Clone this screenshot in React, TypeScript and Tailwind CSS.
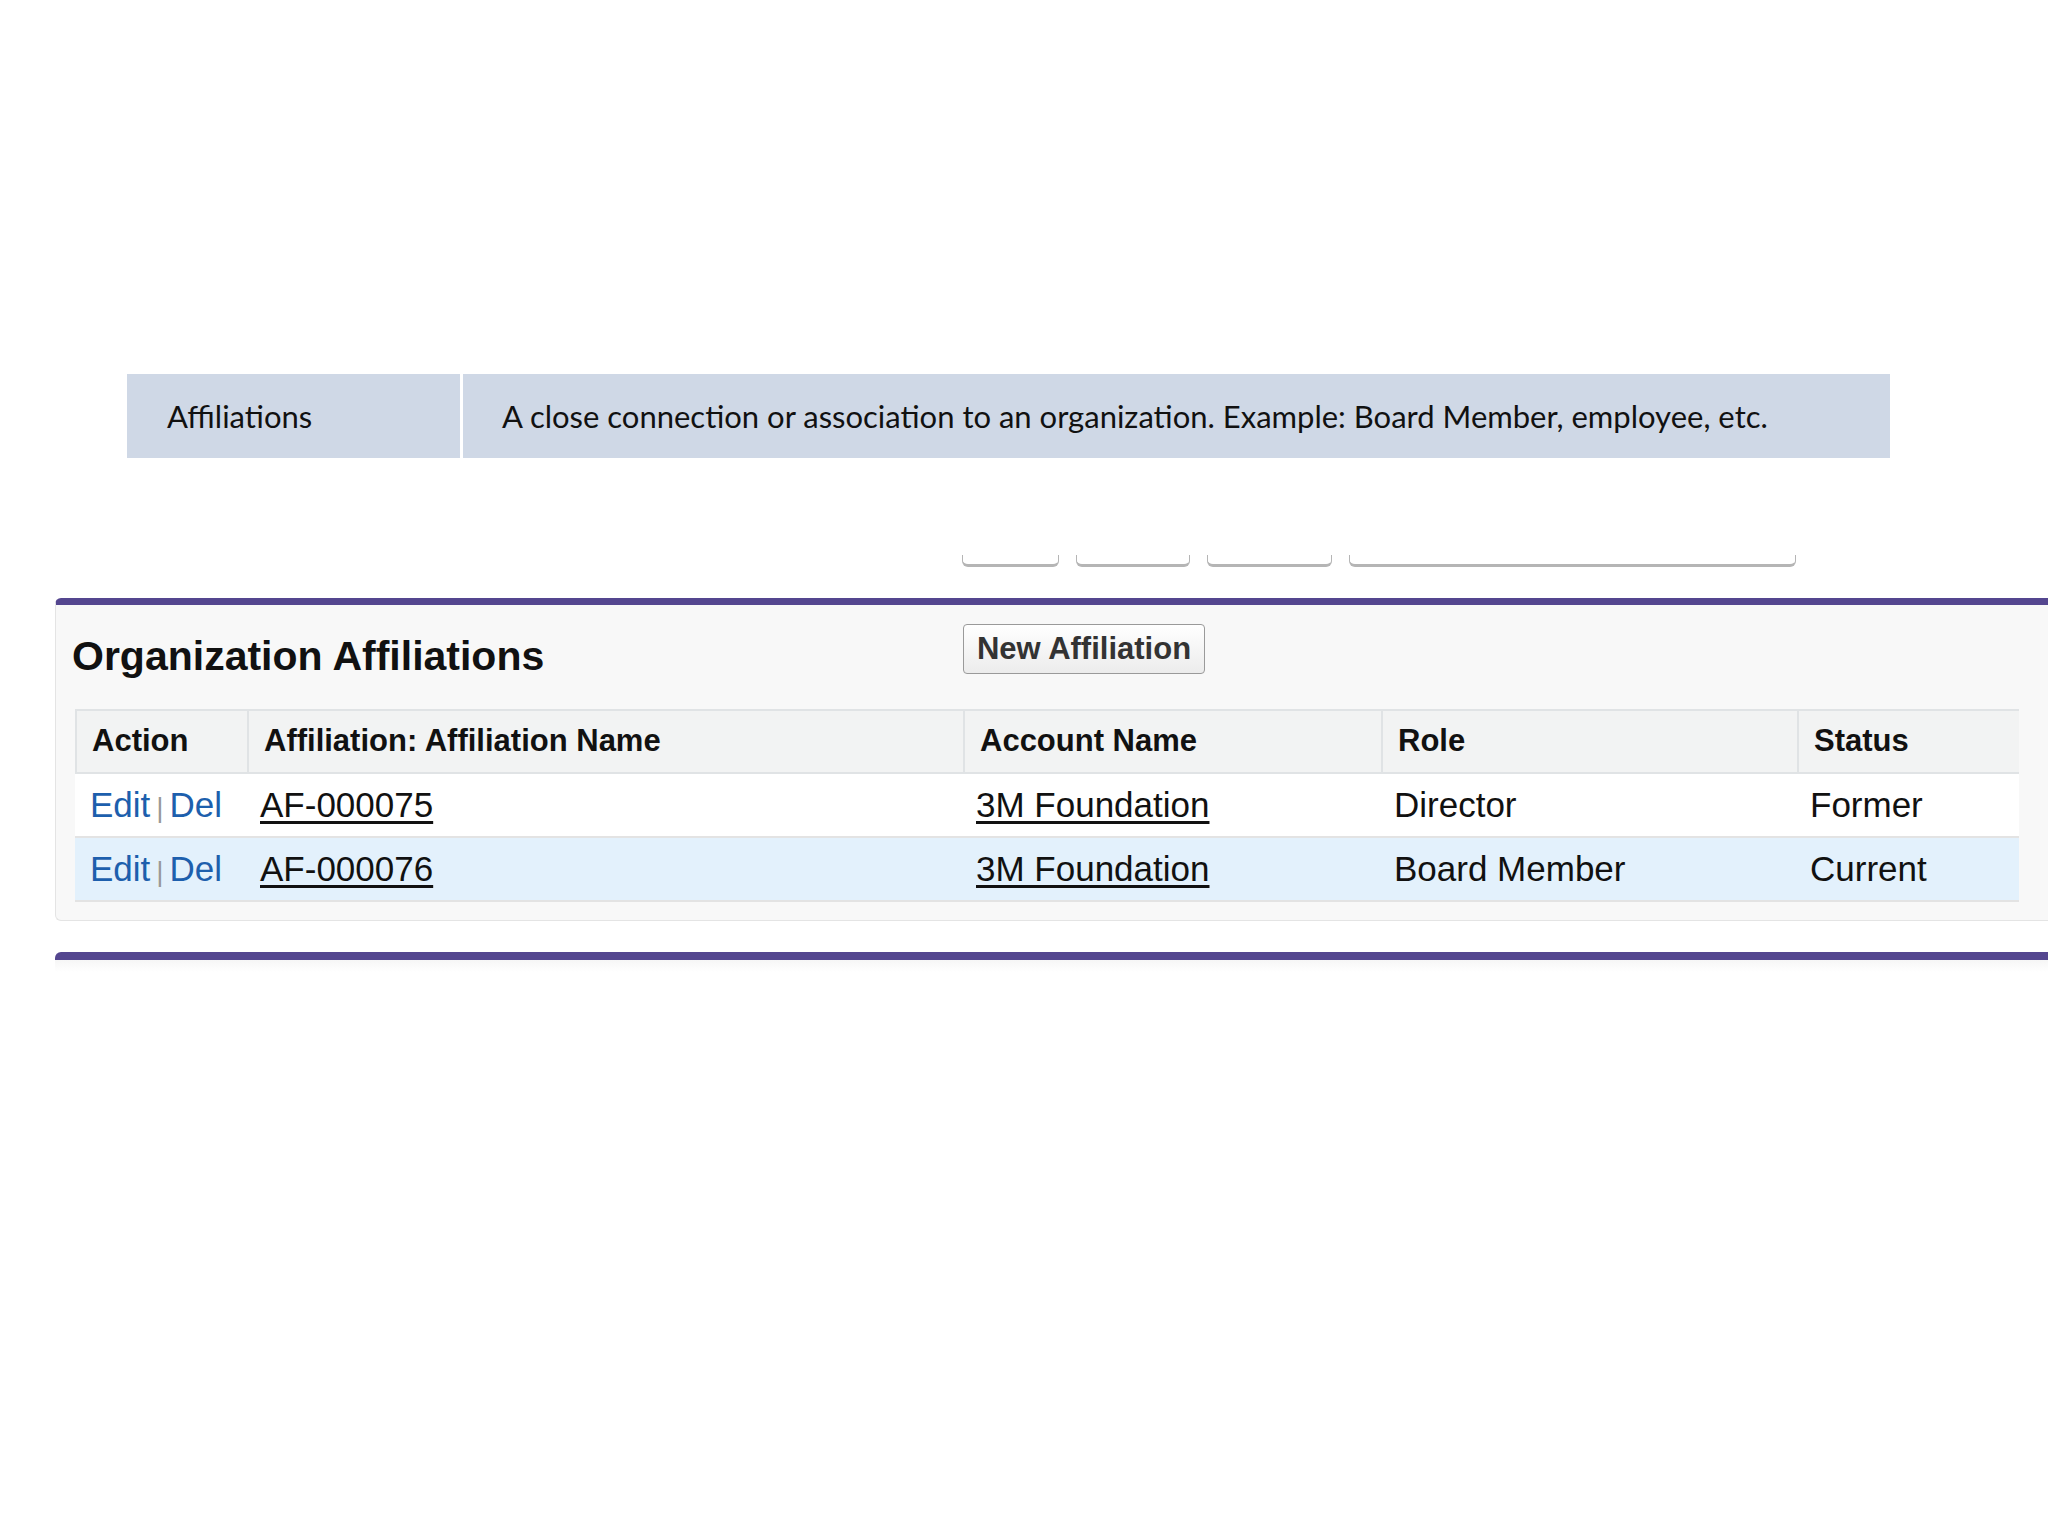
export default function App() {
  const arial = { fontFamily: '"Liberation Sans", Arial, sans-serif' };
  const rows = [
    { id: "AF-000075", acct: "3M Foundation", role: "Director", status: "Former", bg: "bg-white" },
    { id: "AF-000076", acct: "3M Foundation", role: "Board Member", status: "Current", bg: "bg-[#e3f1fc]" },
  ];
  return (
    <div className="w-[2048px] h-[1536px] bg-white overflow-hidden relative">
      <div className="h-[374px]" />
      <div className="ml-[127px] w-[1763px] h-[84px] flex gap-[3px] text-[31px] text-[#111]" style={{ fontFamily: 'Lato, "Open Sans", sans-serif' }}>
        <div className="w-[333px] bg-[#cfd8e6] flex items-center pl-[40px]">Affiliations</div>
        <div className="flex-1 bg-[#cfd8e6] flex items-center pl-[39px] whitespace-nowrap">
          A close connection or association to an organization. Example: Board Member, employee, etc.
        </div>
      </div>
      <div className="h-[140px] relative">
        {[[962, 97], [1076, 114], [1207, 125], [1349, 447]].map(([l, w]) => (
          <div key={l} className="absolute top-[97px] h-[12px] border-b-[3px] border-x border-[#b5b5b5] rounded-b-[6px]" style={{ left: l, width: w }} />
        ))}
      </div>
      <div className="ml-[55px] w-[1993px] border-t-[7px] border-[#54468f] rounded-tl-[6px] bg-[#f8f8f8] border-l border-b border-l-[#e4e4e4] border-b-[#e4e4e4] rounded-bl-[6px] pb-[18px]" style={arial}>
        <div className="h-[104px] flex items-center relative">
          <div className="pl-[16px] text-[41px] font-bold text-[#111] whitespace-nowrap">Organization Affiliations</div>
          <div className="absolute left-[907px] top-[19px] w-[242px] h-[50px] border border-[#9a9a9a] rounded-[4px] bg-gradient-to-b from-white to-[#ececec] flex items-center justify-center text-[31px] font-bold text-[#333] whitespace-nowrap">
            New Affiliation
          </div>
        </div>
        <div className="ml-[19px] w-[1944px] border-t-2 border-[#e0e3e5]">
          <div className="flex h-[63px] bg-[#f2f3f3] border-b-2 border-[#e0e3e5] text-[31px] font-bold text-[#111] items-center whitespace-nowrap">
            <div className="w-[172px] pl-[15px] h-full flex items-center border-l-2 border-[#e0e3e5]">Action</div>
            <div className="w-[716px] pl-[15px] h-full flex items-center border-l-2 border-[#e0e3e5]">Affiliation: Affiliation Name</div>
            <div className="w-[418px] pl-[15px] h-full flex items-center border-l-2 border-[#e0e3e5]">Account Name</div>
            <div className="w-[416px] pl-[15px] h-full flex items-center border-l-2 border-[#e0e3e5]">Role</div>
            <div className="flex-1 pl-[15px] h-full flex items-center border-l-2 border-[#e0e3e5]">Status</div>
          </div>
          {rows.map((r) => (
            <div key={r.id} className={`flex h-[64px] items-center text-[35px] text-[#111] border-b-2 border-[#e3e3e3] whitespace-nowrap ${r.bg}`}>
              <div className="w-[172px] pl-[15px] text-[#1d5fad]">
                Edit<span className="text-[#999] text-[28px] mx-[6px]">|</span>Del
              </div>
              <div className="w-[716px] pl-[13px] underline underline-offset-4">{r.id}</div>
              <div className="w-[418px] pl-[13px] underline underline-offset-4">{r.acct}</div>
              <div className="w-[416px] pl-[13px]">{r.role}</div>
              <div className="flex-1 pl-[13px]">{r.status}</div>
            </div>
          ))}
        </div>
      </div>
      <div className="mt-[31px] ml-[55px] w-[1993px] h-[20px] border-t-[8px] border-[#54468f] rounded-tl-[6px] bg-gradient-to-b from-[#f6f6f6] to-white" />
    </div>
  );
}
